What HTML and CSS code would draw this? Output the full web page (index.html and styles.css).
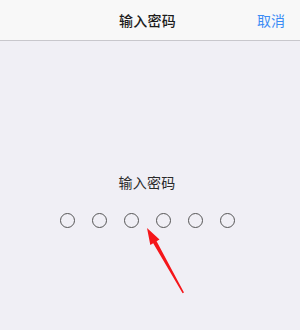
FILE: index.html
```html
<!DOCTYPE html>
<html lang="zh-CN">
<head>
  <meta charset="UTF-8">
  <title>输入密码</title>
  <link rel="stylesheet" href="styles.css">
</head>
<body>
  <div class="screen">
    <div class="nav-bar">
      <div class="nav-title">输入密码</div>
      <div class="nav-cancel">取消</div>
    </div>

    <div class="pin-panel">
      <div class="pin-label">输入密码</div>
      <div class="pin-dots">
        <span class="dot"></span>
        <span class="dot"></span>
        <span class="dot"></span>
        <span class="dot"></span>
        <span class="dot"></span>
        <span class="dot"></span>
      </div>
    </div>

    <!-- annotation arrow -->
    <svg class="arrow" width="300" height="330" viewBox="0 0 300 330">
      <polygon points="147,228 159.5,239.5 156.6,241.3 184,292.5 182.6,293.2 153.2,243.2 150.3,245" fill="#f5161a"/>
    </svg>
  </div>
</body>
</html>
```

FILE: styles.css
```css
html, body {
  margin: 0;
  height: 100%;
  background: #f0eff5;
  font-family: "Noto Sans CJK SC", "Noto Sans", sans-serif;
}

.screen {
  position: relative;
  width: 300px;
  height: 330px;
  overflow: hidden;
}

.nav-bar {
  height: 40px;
  background: #f8f8f8;
  border-bottom: 1px solid #c8c7cc;
  display: flex;
  align-items: center;
  justify-content: center;
  padding-right: 5px;
  position: relative;
}

.nav-title {
  font-size: 14px;
  font-weight: 500;
  color: #1c1c1c;
  letter-spacing: 0.3px;
}

.nav-cancel {
  position: absolute;
  right: 15px;
  top: 0;
  line-height: 40px;
  font-size: 14px;
  color: #3b8cf5;
}

.pin-panel {
  display: flex;
  flex-direction: column;
  align-items: center;
  padding-top: 131px;
  padding-right: 6px;
}

.pin-label {
  font-size: 14px;
  color: #2a2a2a;
  line-height: 20px;
  letter-spacing: 0.3px;
}

.pin-dots {
  display: flex;
  gap: 17px;
  margin-top: 21px;
}

.dot {
  width: 13px;
  height: 13px;
  border: 1.2px solid #555;
  border-radius: 50%;
}

.arrow {
  position: absolute;
  left: 0;
  top: 0;
}
```
